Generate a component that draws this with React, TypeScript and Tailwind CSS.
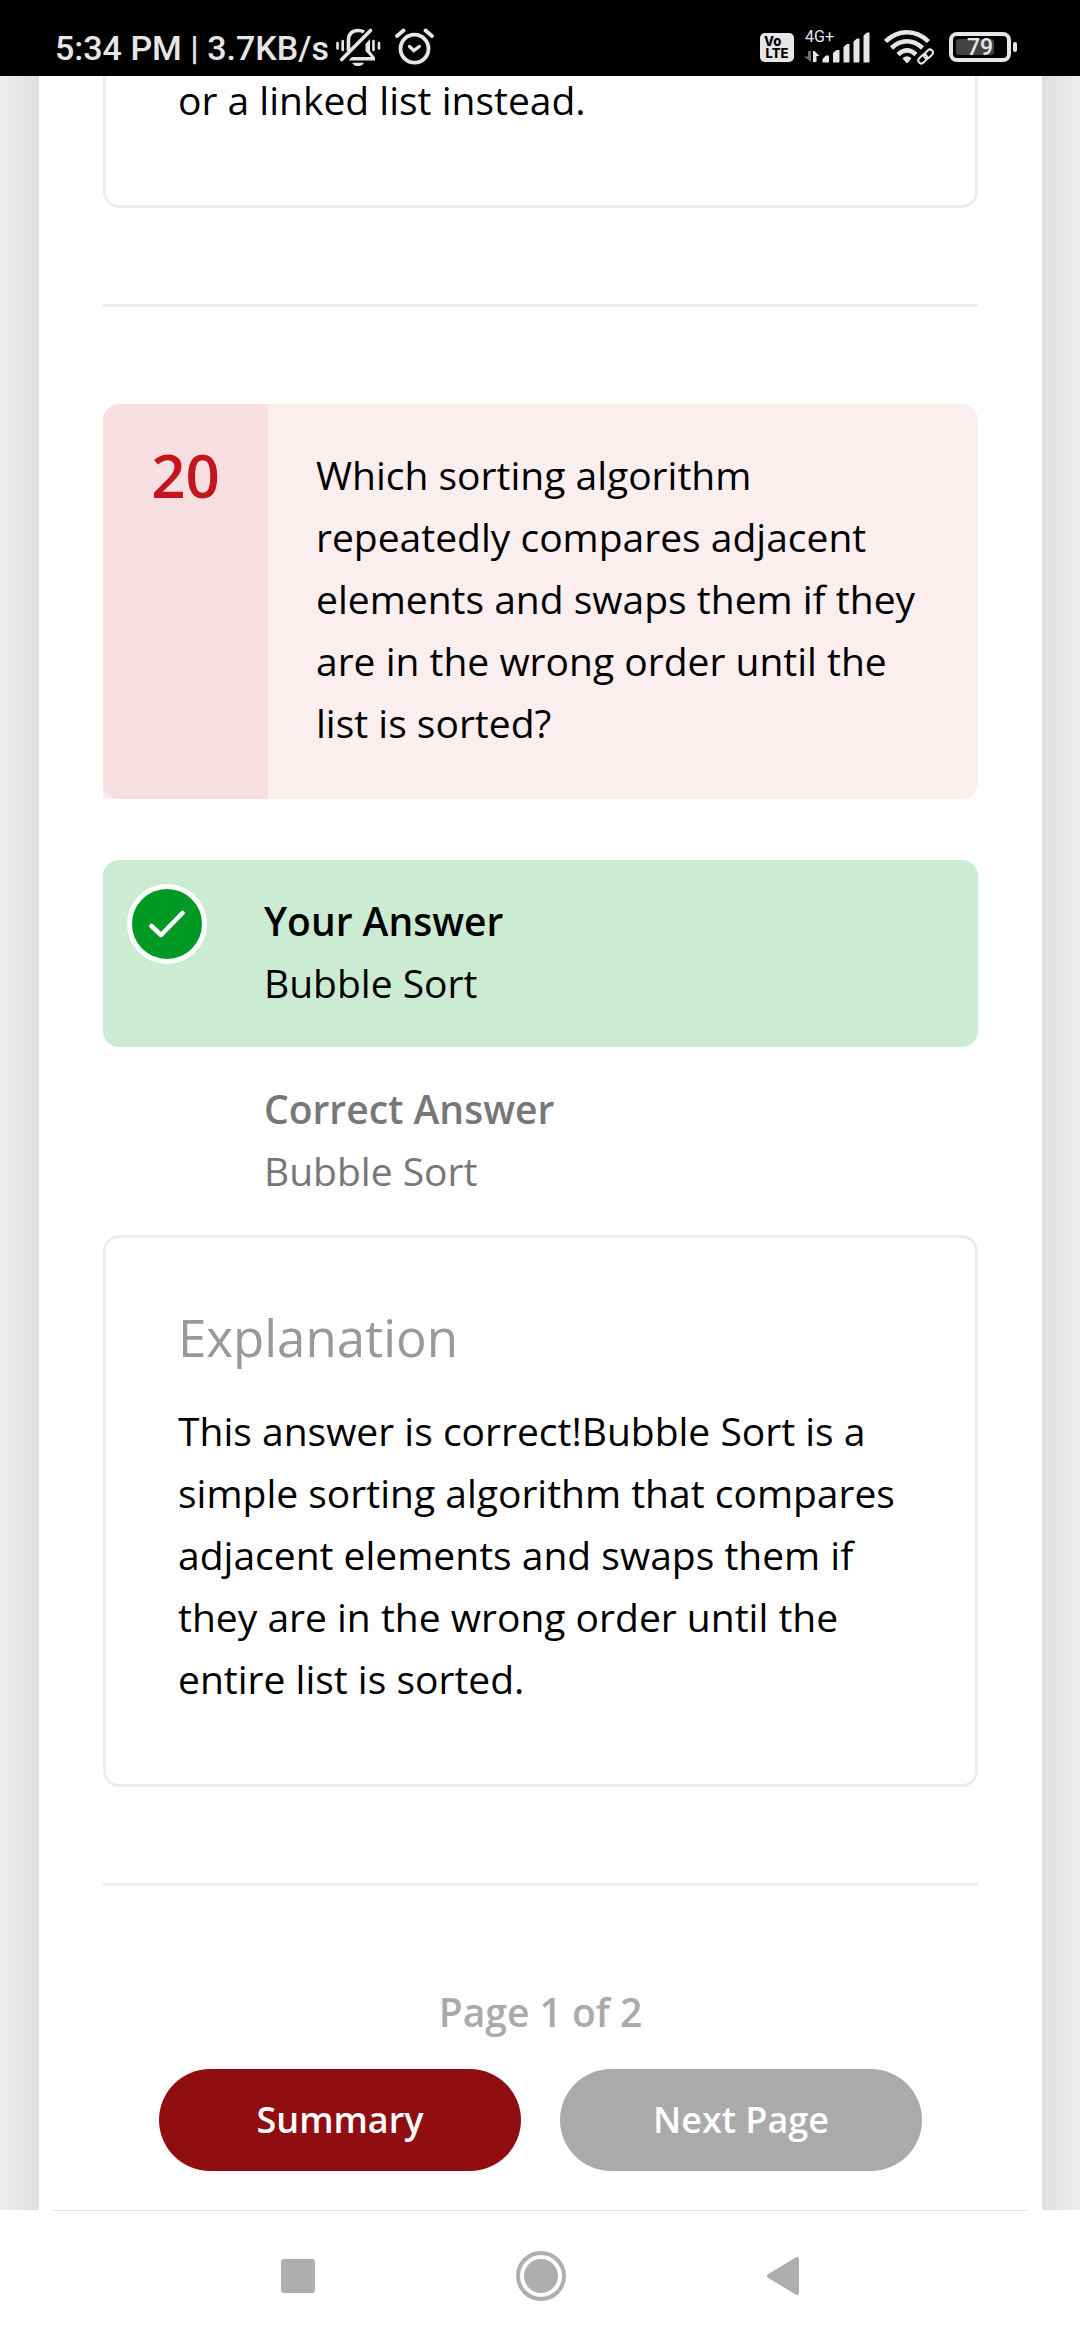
import React from "react";

const FG = "#e6e6e6";

function MutedBell() {
  return (
    <svg className="h-[42px] w-[46px]" viewBox="14 6 46 42" fill="none" stroke={FG} aria-label="Muted">
      <path d="M27.500 31V20C27.500 13.500 31.500 10.500 37 10.500C39.500 10.500 41.500 11 43 12" strokeWidth="3.600" />
      <path d="M20.700 39.500L49.500 10.500" strokeWidth="3.600" strokeLinecap="round" />
      <path d="M31 37H50L44.500 31V24L49 19V31L54 37.500V40.500H27.500Z" fill={FG} stroke="none" />
      <path d="M31 42.700H43C41 47.200 33 47.200 31 42.700Z" fill={FG} stroke="none" />
      <path d="M21.700 21V30M52.500 21V30" strokeWidth="2.600" strokeLinecap="round" />
      <path d="M16.500 23V28.500M58 23V28.500" strokeWidth="2.600" strokeLinecap="round" />
    </svg>
  );
}

function AlarmClock() {
  return (
    <svg className="h-[40px] w-[40px]" viewBox="74 7 40 40" fill="none" stroke={FG} strokeLinecap="round" aria-label="Alarm set">
      <circle cx="93.500" cy="28.700" r="14" strokeWidth="3.800" />
      <path d="M76 16L82.500 10.500M111 16L104.500 10.500" strokeWidth="3.800" />
      <path d="M88.500 26.500L92.800 30.500L98.300 26.500" strokeWidth="3.400" />
    </svg>
  );
}

function Volte() {
  return (
    <span className="flex h-[29px] w-[34px] flex-col items-center justify-center rounded-[5px] bg-[#e6e6e6] font-[Inter,sans-serif] text-[13px] leading-[12px] font-extrabold text-black">
      <span className="self-start pl-1">Vo</span>
      <span>LTE</span>
    </span>
  );
}

function Signal() {
  return (
    <svg className="h-[44px] w-[66px]" viewBox="0 0 66 44" fill={FG} aria-label="Mobile signal">
      <text x="1" y="17" fontFamily="Roboto, sans-serif" fontSize="16">4G+</text>
      <path d="M4 26H7V37L0 31.500H4Z" fill="#6b6b6b" />
      <path d="M9 37V26H10.500L15.500 31H12.500V37Z" />
      <path d="M18.500 37.500V34L22 30.500H25V36.500Q25 37.500 24 37.500Z" />
      <path d="M29 37.500V28L32.500 25H35.500V36.500Q35.500 37.500 34.500 37.500Z" />
      <path d="M39.500 37.500V22L43 19H45.500V36.500Q45.500 37.500 44.500 37.500Z" />
      <path d="M49.500 37.500V16.500L53 13.500H55.500V36.500Q55.500 37.500 54.500 37.500Z" />
      <path d="M59.500 37.500V10.500L63 7.500H65.500V36.500Q65.500 37.500 64.500 37.500Z" />
    </svg>
  );
}

function Wifi() {
  return (
    <svg className="h-[36px] w-[50px]" viewBox="0 0 50 36" fill="none" stroke={FG} aria-label="Wi-Fi">
      <path d="M1.500 12.500C14 0 32 0 44.500 12.500" strokeWidth="4.500" />
      <path d="M7.500 19C17 10 29 10 38.500 19" strokeWidth="4.500" />
      <path d="M14 25.500C20 20 26 20 32 25.500" strokeWidth="4.500" />
      <path d="M18.500 29.500C21.500 26.500 24.500 26.500 27.500 29.500L23 34.500Z" fill={FG} stroke="none" />
      <g strokeWidth="2">
        <rect x="-5" y="-3" width="10" height="6" rx="3" transform="translate(44.500 25) rotate(-45)" />
        <rect x="-5" y="-3" width="10" height="6" rx="3" transform="translate(38.800 30) rotate(-45)" />
      </g>
    </svg>
  );
}

function Battery() {
  return (
    <span className="flex items-center gap-[2px]" aria-label="Battery">
      <span className="flex h-[30px] w-[62px] items-center rounded-[8px] border-4 border-[#e6e6e6] px-[3px]">
        <span className="flex h-[16px] w-[38px] items-center justify-center rounded-[3px] bg-[#424242] pl-[10px] font-[Roboto,sans-serif] text-[23px] leading-none font-medium text-[#e6e6e6]">
          79
        </span>
      </span>
      <span className="h-[10px] w-[4px] rounded-[2px] bg-[#e6e6e6]" />
    </span>
  );
}

function StatusBar() {
  return (
    <header className="relative flex h-[76px] items-center justify-between bg-black pt-[18px] pr-[63px] pl-[55px]">
      <div className="flex items-center gap-[6px]">
        <span className="pt-[2px] font-[Roboto,sans-serif] text-[34px] leading-[40px] font-medium text-[#e6e6e6]">
          5:34 PM | 3.7KB/s
        </span>
        <div className="flex items-center gap-[14px]">
          <MutedBell />
          <AlarmClock />
        </div>
      </div>
      <div className="flex items-center">
        <Volte />
        <span className="ml-[10px]"><Signal /></span>
        <span className="ml-[14px]"><Wifi /></span>
        <span className="ml-[15px]"><Battery /></span>
      </div>
    </header>
  );
}

function Divider() {
  return <hr className="mt-24 mb-[97px] border-t-3 border-[#ededed]" />;
}

function Answer({ label, value, correct }: { label: string; value: string; correct?: boolean }) {
  return (
    <div
      className={
        correct
          ? "relative rounded-[16px] bg-[#cbebd3] pt-[30px] pb-[33px] pl-[161px] text-black"
          : "pt-[30px] pb-[33px] pl-[161px] text-[#777777]"
      }
    >
      {correct && (
        <span className="absolute top-6 left-6 flex size-20 items-center justify-center rounded-full border-5 border-white bg-[#009924]">
          <svg className="h-[28px] w-[38px]" viewBox="0 0 38 28" fill="none" stroke="#fff" strokeWidth="4.500" strokeLinecap="round" strokeLinejoin="round" aria-label="Correct">
            <path d="M3.500 16L13 25L34.500 3" />
          </svg>
        </span>
      )}
      <h3 className="font-semibold">{label}</h3>
      <p>{value}</p>
    </div>
  );
}

export default function App() {
  return (
    <div className="flex min-h-screen flex-col bg-white font-['Open_Sans',sans-serif] text-[39px] leading-[62px] text-black">
      <StatusBar />
      <div className="flex">
        <div className="w-[39px] shrink-0 bg-linear-to-r from-[#eeeeee] to-[#dfdfdf]" />
        <main className="min-w-0 flex-1 px-16 pb-[39px]">
          <section className="rounded-b-[16px] border-3 border-t-0 border-[#ededed] px-[72px] pb-[74px]">
            <p className="-mt-[7px]">or a linked list instead.</p>
          </section>
          <Divider />
          <section>
            <div className="flex rounded-[16px] rounded-bl-none bg-[#faeeee]">
              <div className="w-[165px] shrink-0 rounded-l-[16px] bg-[#f6dee1] pt-10 text-center text-[60px] font-semibold text-[#c3151b]">
                20
              </div>
              <h2 className="px-12 pt-10 pb-[45px]">
                Which sorting algorithm repeatedly compares adjacent elements and swaps them if they are in the wrong order until the list is sorted?
              </h2>
            </div>
            <div className="mt-[61px] flex flex-col gap-px">
              <Answer label="Your Answer" value="Bubble Sort" correct />
              <Answer label="Correct Answer" value="Bubble Sort" />
            </div>
            <div className="rounded-[16px] border-3 border-[#ededed] px-[72px] pt-[68px] pb-[74px]">
              <h3 className="mb-8 text-[51px] text-[#999999]">Explanation</h3>
              <p>
                This answer is correct!Bubble Sort is a simple sorting algorithm that compares adjacent elements and swaps them if they are in the wrong order until the entire list is sorted.
              </p>
            </div>
          </section>
          <Divider />
          <footer>
            <p className="text-center leading-[58px] font-semibold text-[#aaaaaa]">Page 1 of 2</p>
            <div className="mx-14 mt-7 flex gap-[39px]">
              <button className="h-[102px] flex-1 rounded-full bg-[#900d12] text-[36px] font-semibold text-white">Summary</button>
              <button className="h-[102px] flex-1 rounded-full bg-[#aaaaaa] text-[36px] font-semibold text-white">Next Page</button>
            </div>
          </footer>
        </main>
        <div className="w-[38px] shrink-0 bg-linear-to-l from-[#ececec] to-[#dfdfdf]" />
      </div>
      <nav className="flex flex-1 flex-col bg-white">
        <hr className="mx-[52px] border-t border-[#e3e3e3]" />
        <div className="flex flex-1 items-center justify-center gap-[201px]">
          <button aria-label="Recent apps" className="size-[34px] rounded-[3px] bg-[#aeaeae]" />
          <button aria-label="Home" className="flex size-[50px] items-center justify-center rounded-full border-4 border-[#aeaeae]">
            <span className="size-[34px] rounded-full bg-[#aeaeae]" />
          </button>
          <button aria-label="Back">
            <svg className="h-[38px] w-[32px]" viewBox="0 0 32 38" fill="#aeaeae" stroke="#aeaeae" strokeWidth="4" strokeLinejoin="round">
              <path d="M2 19L30 2V36Z" />
            </svg>
          </button>
        </div>
      </nav>
    </div>
  );
}
